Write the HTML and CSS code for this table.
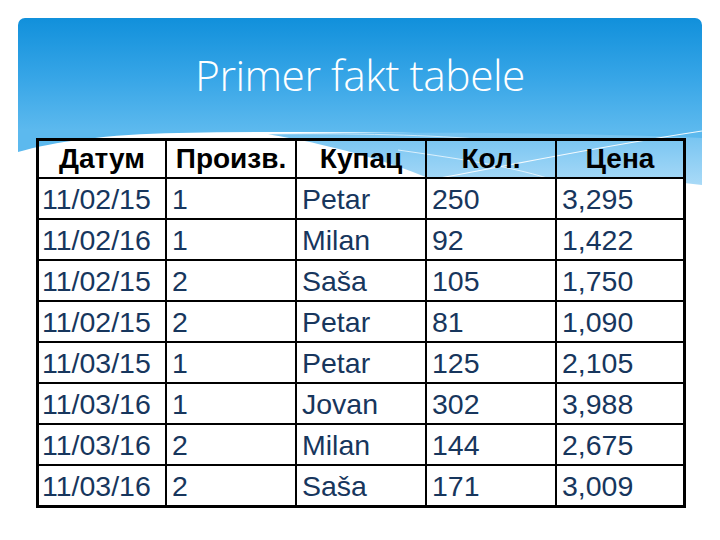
FILE: index.html
```html
<!DOCTYPE html>
<html lang="sr">
<head>
<meta charset="utf-8">
<title>Primer fakt tabele</title>
<link rel="stylesheet" href="styles.css">
</head>
<body>
<div class="slide">
  <div class="banner">
    <h1 class="title">Primer fakt tabele</h1>
  </div>
  <svg class="wave" viewBox="0 0 684 70" width="684" height="70" preserveAspectRatio="none" aria-hidden="true">
    <defs>
      <linearGradient id="lb" x1="0" y1="0" x2="0" y2="1">
        <stop offset="0" stop-color="#74c3f1"/>
        <stop offset="1" stop-color="#a9daf7"/>
      </linearGradient>
    </defs>
    <path d="M0,0 H684 V12 C520,4 330,0 160,3 C90,4 35,12 0,22 Z" fill="#5cb9ee"/>
    <path d="M250,4 C380,2 560,2 684,8 V55 C640,50 600,46 560,48 C520,50 470,52 425,55 C400,42 350,25 300,14 C285,10 265,7 250,4 Z" fill="url(#lb)"/>
    <path d="M410,50 C480,38 560,20 684,1" stroke="#ffffff" stroke-width="1.2" fill="none" opacity="0.9"/>
    <path d="M380,20 C450,30 520,40 560,60" stroke="#ffffff" stroke-width="1" fill="none" opacity="0.7"/>
    <path d="M250,4 C330,3 420,5 470,10" stroke="#ffffff" stroke-width="1" fill="none" opacity="0.6"/>
  </svg>
  <table class="facts">
    <thead>
      <tr><th>Датум</th><th>Произв.</th><th>Купац</th><th>Кол.</th><th>Цена</th></tr>
    </thead>
    <tbody>
      <tr><td>11/02/15</td><td>1</td><td>Petar</td><td>250</td><td>3,295</td></tr>
      <tr><td>11/02/16</td><td>1</td><td>Milan</td><td>92</td><td>1,422</td></tr>
      <tr><td>11/02/15</td><td>2</td><td>Saša</td><td>105</td><td>1,750</td></tr>
      <tr><td>11/02/15</td><td>2</td><td>Petar</td><td>81</td><td>1,090</td></tr>
      <tr><td>11/03/15</td><td>1</td><td>Petar</td><td>125</td><td>2,105</td></tr>
      <tr><td>11/03/16</td><td>1</td><td>Jovan</td><td>302</td><td>3,988</td></tr>
      <tr><td>11/03/16</td><td>2</td><td>Milan</td><td>144</td><td>2,675</td></tr>
      <tr><td>11/03/16</td><td>2</td><td>Saša</td><td>171</td><td>3,009</td></tr>
    </tbody>
  </table>
</div>
</body>
</html>
```
FILE: styles.css
```css
html, body {
  margin: 0;
  padding: 0;
  background: #ffffff;
}
.slide {
  position: relative;
  width: 720px;
  height: 540px;
  padding-top: 18px;
  box-sizing: border-box;
  overflow: hidden;
}
.banner {
  margin-left: 18px;
  width: 684px;
  height: 112px;
  border-radius: 7px 7px 0 0;
  background: linear-gradient(to bottom, #1190db 0%, #38a6e7 55%, #5cb9ee 100%);
  display: flex;
  justify-content: center;
}
.title {
  margin: 0;
  padding-top: 33px;
  font-family: "Open Sans", "Liberation Sans", sans-serif;
  font-weight: 300;
  font-size: 42.5px;
  line-height: 48px;
  color: #ffffff;
  letter-spacing: -0.5px;
}
.wave {
  position: absolute;
  left: 18px;
  top: 130px;
  display: block;
  z-index: 0;
}
.facts {
  position: relative;
  z-index: 1;
  margin: 8px 0 0 36px;
  width: 650px;
  border: 3px solid #000;
  border-collapse: separate;
  border-spacing: 0;
  table-layout: fixed;
  font-family: "Liberation Sans", Arial, sans-serif;
}
.facts th, .facts td {
  box-sizing: border-box;
  border-right: 2px solid #000;
  border-bottom: 2px solid #000;
  padding: 0 0 0 5px;
  width: 130px;
  white-space: nowrap;
  overflow: hidden;
}
.facts th:first-child, .facts td:first-child {
  width: 128px;
  padding-left: 3px;
}
.facts th:last-child, .facts td:last-child {
  width: 126px;
  border-right: none;
}
.facts tbody tr:last-child td {
  border-bottom: none;
}
.facts th {
  height: 38px;
  padding: 0;
  background: transparent;
  color: #000;
  font-weight: bold;
  font-size: 28px;
  text-align: center;
  line-height: 36px;
}
.facts th:first-child {
  padding-left: 0;
}
.facts td {
  height: 41px;
  background: #ffffff;
  color: #17365d;
  font-size: 28.5px;
  line-height: 38px;
  text-align: left;
}
.facts tbody tr:last-child td {
  height: 39px;
}
```
